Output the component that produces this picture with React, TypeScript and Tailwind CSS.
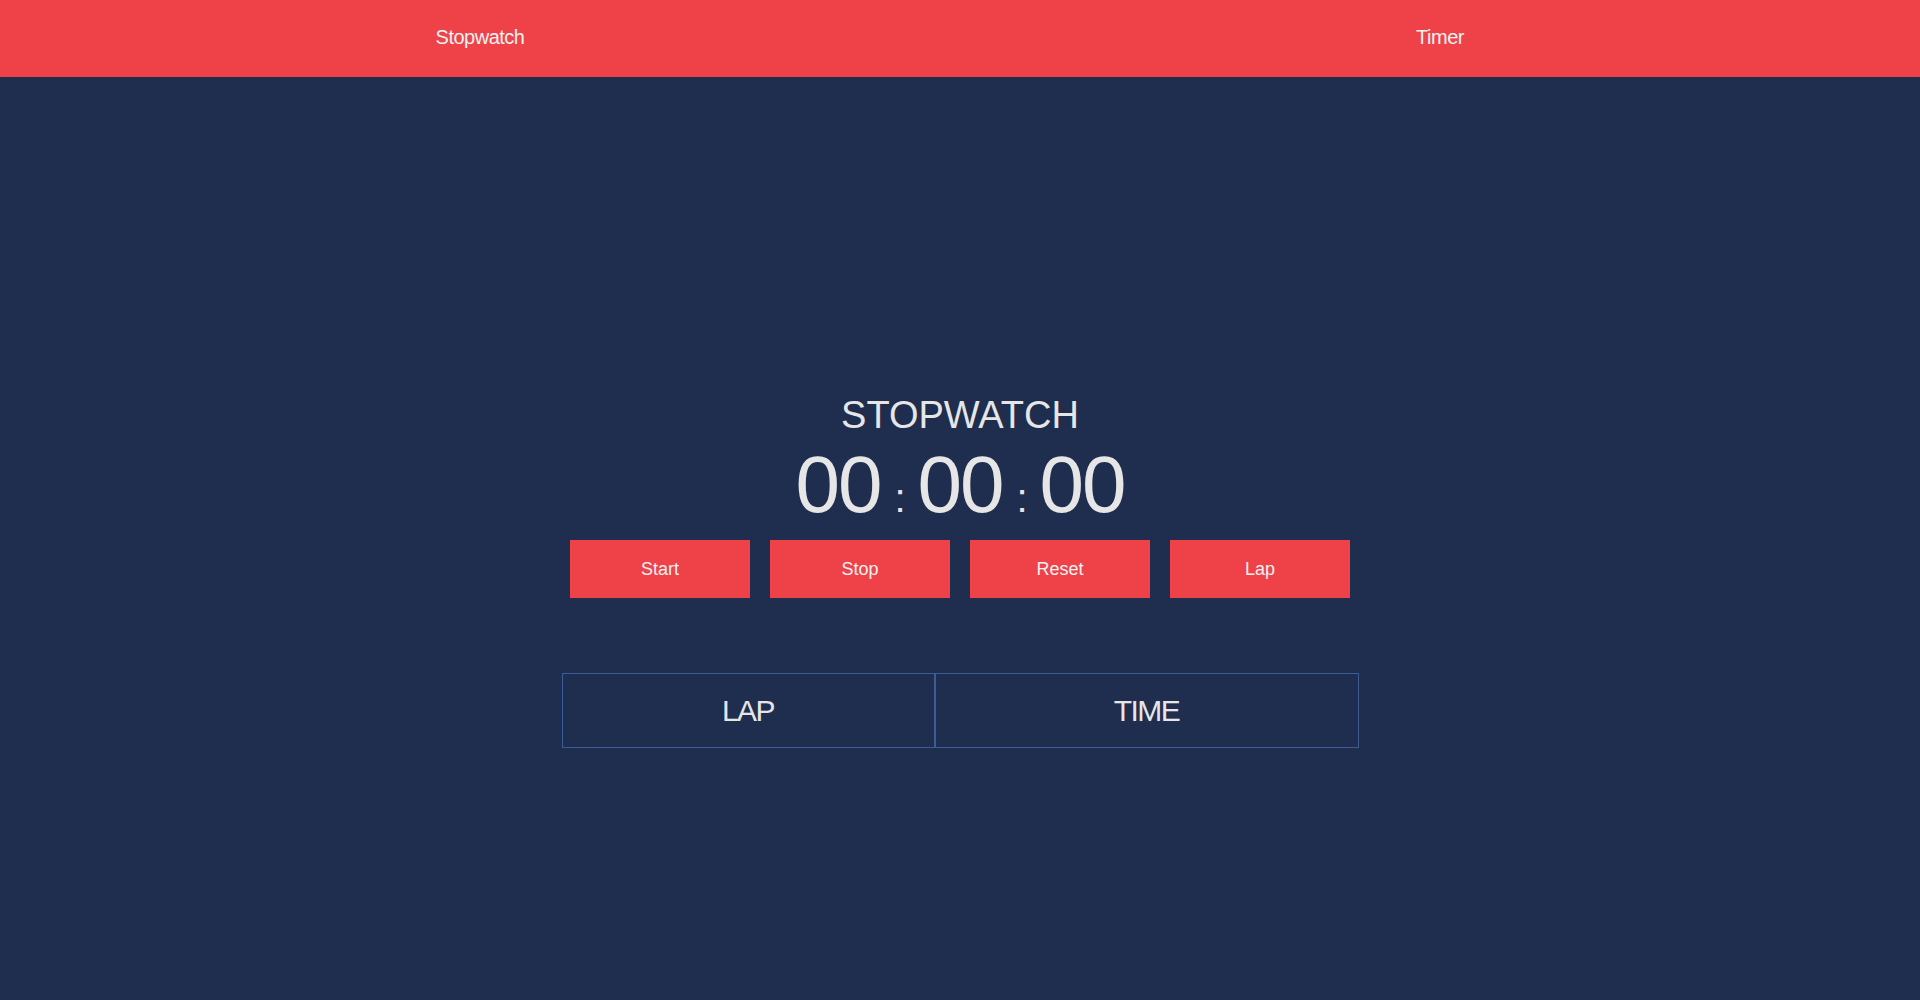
import React from "react";

const font = { fontFamily: '"Liberation Sans", Arial, sans-serif' };

function Sep() {
  return <span className="mx-[14px] text-[40px] leading-[40px]">:</span>;
}

export default function App() {
  const buttons = ["Start", "Stop", "Reset", "Lap"];
  return (
    <div style={font} className="min-h-[1000px] w-full bg-[#1f2d4f] text-[#e6e6e6]">
      <nav className="grid h-[77px] grid-cols-2 bg-[#ef4248]">
        <a className="flex items-center justify-center pb-[3px] text-[20px] tracking-[-0.5px] text-[#f2f2f2]">Stopwatch</a>
        <a className="flex items-center justify-center pb-[3px] text-[20px] tracking-[-0.5px] text-[#f2f2f2]">Timer</a>
      </nav>

      <main className="flex flex-col items-center pt-[316px]">
        <h1 className="text-[38px] leading-[44px]">STOPWATCH</h1>
        <div className="mt-[8px] flex h-[80px] items-baseline text-[80px] leading-[80px] tracking-[-2px]">
          <span>00</span>
          <Sep />
          <span>00</span>
          <Sep />
          <span>00</span>
        </div>
        <div className="mt-[15px] flex gap-[20px]">
          {buttons.map((b) => (
            <button
              key={b}
              className="flex h-[58px] w-[180px] items-center justify-center bg-[#ef4248] text-[18px] text-[#f2f2f2]"
            >
              {b}
            </button>
          ))}
        </div>

        <div className="mt-[75px] grid w-[797px] grid-cols-[373px_424px]">
          <div className="flex h-[75px] items-center justify-center border border-[#3b5c94] text-[30px] tracking-[-1.5px]">
            LAP
          </div>
          <div className="flex h-[75px] items-center justify-center border border-[#3b5c94] text-[30px] tracking-[-1.5px]">
            TIME
          </div>
        </div>
      </main>
    </div>
  );
}
